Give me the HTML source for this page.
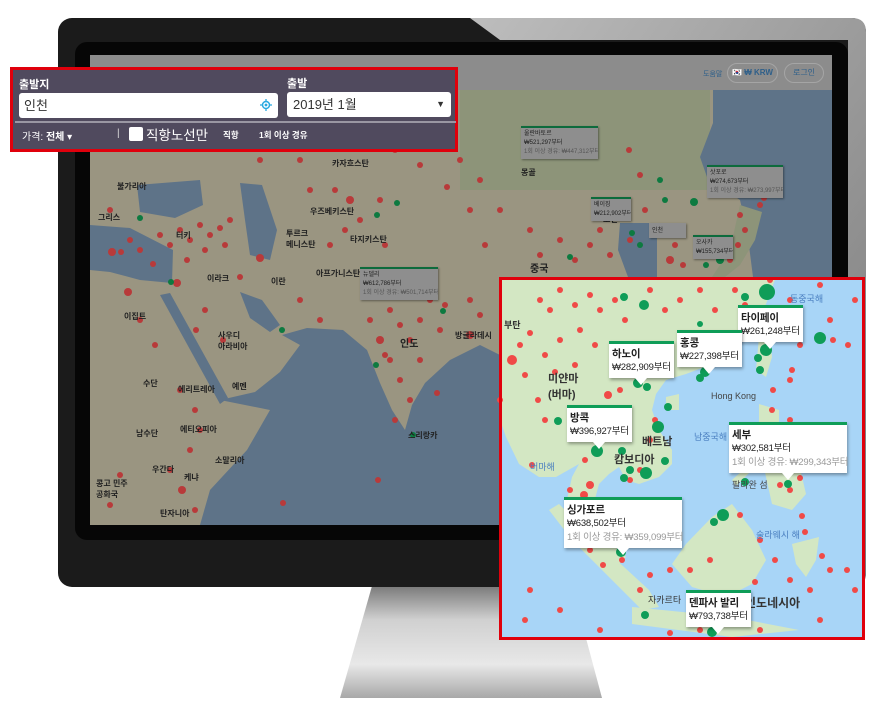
<!DOCTYPE html>
<html><head><meta charset="utf-8"><style>
*{margin:0;padding:0;box-sizing:border-box}
body{width:880px;height:720px;background:#fff;position:relative;overflow:hidden;font-family:"Liberation Sans","Noto Sans CJK KR",sans-serif}
.a{position:absolute}
.tt{position:absolute;background:#fff;border-top:3px solid #0f9d58;box-shadow:1px 2px 3px rgba(0,0,0,.35);font-size:9.5px;letter-spacing:-0.2px;color:#222;padding:3px 3px;line-height:14px;white-space:nowrap}
.tt b{font-weight:bold;display:block;font-size:10.5px}
.tt i{font-style:normal;color:#999;display:block}
.tt:after{content:"";position:absolute;left:50%;bottom:-7px;margin-left:-6px;border:6px solid transparent;border-top-color:#fff;border-bottom:0;border-top-width:7px}
.gt{position:absolute;background:#8e8e8e;border-top:2px solid #0d6b3c;box-shadow:1px 1px 2px rgba(0,0,0,.4);font-size:6px;color:#222;padding:2px 3px;line-height:9px;white-space:nowrap;overflow:hidden}
.gt i{font-style:normal;color:#555;display:block}
.lb{position:absolute;font-size:8px;color:#222;font-weight:bold;white-space:nowrap}
.il{position:absolute;font-size:11px;color:#333;font-weight:bold;white-space:nowrap}
</style></head><body>
<svg class="a" style="left:0;top:0" width="880" height="720">
<defs>
<linearGradient id="st" x1="0" y1="0" x2="0" y2="1"><stop offset="0" stop-color="#7a7a7a"/><stop offset=".3" stop-color="#d0d0d0"/><stop offset=".7" stop-color="#e8e8e8"/><stop offset="1" stop-color="#a8a8a8"/></linearGradient>
<linearGradient id="rf" x1="0" y1="0" x2="1" y2="1"><stop offset="0" stop-color="#bdbdbd"/><stop offset="1" stop-color="#7a7a7a"/></linearGradient>
</defs>
<polygon points="372,586 572,586 602,698 340,698" fill="url(#st)"/>
<rect x="58" y="18" width="808" height="569" rx="14" fill="#1b1b1b"/>
<path d="M470,18 L852,18 Q866,18 866,32 L866,573 Q866,587 852,587 L848,587 L848,40 L500,40 Z" fill="url(#rf)"/>
<rect x="75" y="42" width="773" height="498" rx="12" fill="#060606"/>
<rect x="90" y="55" width="742" height="470" fill="#9a9581"/>
<rect x="90" y="55" width="742" height="35" fill="#8c8c8c"/>
<rect x="460" y="90" width="250" height="100" fill="#8d9479"/>
<polygon points="713,90 832,90 832,277 753,277 747,230 740,200 707,177 700,157 713,123" fill="#5e7388"/>
<polygon points="740,205 762,212 755,240 740,265 725,277 712,277 730,250" fill="#8d9479"/>
<polygon points="620,223 657,223 657,277 628,277 618,250" fill="#5e7388"/>
<polygon points="137,185 200,180 203,205 175,218 140,212" fill="#5e7388"/>
<polygon points="240,183 262,185 277,230 270,260 250,255 245,220" fill="#5e7388"/>
<polygon points="90,225 130,228 173,250 172,283 140,280 110,272 90,270" fill="#5e7388"/>
<polygon points="160,295 170,293 228,398 220,404" fill="#5e7388"/>
<polygon points="240,292 262,300 280,325 270,332 250,318" fill="#5e7388"/>
<polygon points="220,400 255,392 280,372 300,345 282,335 307,328 343,330 367,350 380,383 392,410 405,430 412,405 425,383 450,360 480,345 500,355 500,525 200,525 210,490 247,450 270,410" fill="#5e7388"/>
<g fill="#b83a3a">
<circle cx="150" cy="100" r="3"/><circle cx="110" cy="210" r="3"/><circle cx="112" cy="252" r="4"/><circle cx="121" cy="252" r="3"/><circle cx="130" cy="240" r="3"/><circle cx="140" cy="250" r="3"/><circle cx="160" cy="235" r="3"/><circle cx="170" cy="245" r="3"/><circle cx="180" cy="230" r="3"/><circle cx="190" cy="240" r="3"/><circle cx="200" cy="225" r="3"/><circle cx="210" cy="235" r="3"/><circle cx="220" cy="228" r="3"/><circle cx="230" cy="220" r="3"/><circle cx="225" cy="245" r="3"/><circle cx="205" cy="250" r="3"/><circle cx="187" cy="260" r="3"/><circle cx="153" cy="264" r="3"/><circle cx="128" cy="292" r="4"/><circle cx="177" cy="283" r="4"/><circle cx="260" cy="258" r="4"/><circle cx="240" cy="277" r="3"/><circle cx="205" cy="310" r="3"/><circle cx="196" cy="330" r="3"/><circle cx="223" cy="340" r="3"/><circle cx="140" cy="320" r="3"/><circle cx="155" cy="345" r="3"/><circle cx="180" cy="390" r="3"/><circle cx="195" cy="410" r="3"/><circle cx="200" cy="430" r="3"/><circle cx="190" cy="450" r="3"/><circle cx="170" cy="470" r="3"/><circle cx="182" cy="490" r="4"/><circle cx="195" cy="510" r="3"/><circle cx="120" cy="475" r="3"/><circle cx="110" cy="505" r="3"/><circle cx="300" cy="300" r="3"/><circle cx="320" cy="320" r="3"/><circle cx="330" cy="245" r="3"/><circle cx="345" cy="230" r="3"/><circle cx="360" cy="220" r="3"/><circle cx="380" cy="200" r="3"/><circle cx="385" cy="245" r="3"/><circle cx="400" cy="290" r="3"/><circle cx="380" cy="340" r="4"/><circle cx="378" cy="480" r="3"/><circle cx="283" cy="503" r="3"/><circle cx="390" cy="310" r="3"/><circle cx="370" cy="320" r="3"/><circle cx="400" cy="325" r="3"/><circle cx="420" cy="320" r="3"/><circle cx="410" cy="340" r="3"/><circle cx="390" cy="360" r="3"/><circle cx="400" cy="380" r="3"/><circle cx="410" cy="400" r="3"/><circle cx="420" cy="360" r="3"/><circle cx="440" cy="330" r="3"/><circle cx="445" cy="305" r="3"/><circle cx="470" cy="300" r="3"/><circle cx="470" cy="335" r="4"/><circle cx="480" cy="315" r="3"/><circle cx="430" cy="300" r="3"/><circle cx="385" cy="355" r="3"/><circle cx="395" cy="420" r="3"/><circle cx="437" cy="393" r="3"/><circle cx="460" cy="160" r="3"/><circle cx="480" cy="180" r="3"/><circle cx="470" cy="210" r="3"/><circle cx="485" cy="245" r="3"/><circle cx="500" cy="210" r="3"/><circle cx="530" cy="230" r="3"/><circle cx="540" cy="255" r="3"/><circle cx="560" cy="240" r="3"/><circle cx="575" cy="260" r="3"/><circle cx="590" cy="245" r="3"/><circle cx="600" cy="230" r="3"/><circle cx="610" cy="255" r="3"/><circle cx="630" cy="240" r="3"/><circle cx="640" cy="175" r="3"/><circle cx="645" cy="210" r="3"/><circle cx="670" cy="260" r="4"/><circle cx="675" cy="245" r="3"/><circle cx="683" cy="265" r="3"/><circle cx="740" cy="215" r="3"/><circle cx="745" cy="230" r="3"/><circle cx="738" cy="245" r="3"/><circle cx="730" cy="260" r="3"/><circle cx="764" cy="198" r="3"/><circle cx="760" cy="205" r="3"/><circle cx="629" cy="150" r="3"/><circle cx="395" cy="150" r="3"/><circle cx="420" cy="165" r="3"/><circle cx="447" cy="187" r="3"/><circle cx="310" cy="190" r="3"/><circle cx="335" cy="190" r="3"/><circle cx="350" cy="200" r="4"/><circle cx="300" cy="160" r="3"/><circle cx="260" cy="160" r="3"/></g>
<g fill="#0d7a40"><circle cx="140" cy="218" r="3"/><circle cx="171" cy="282" r="3"/><circle cx="397" cy="203" r="3"/><circle cx="377" cy="215" r="3"/><circle cx="282" cy="330" r="3"/><circle cx="376" cy="365" r="3"/><circle cx="413" cy="435" r="3"/><circle cx="443" cy="311" r="3"/><circle cx="660" cy="180" r="3"/><circle cx="665" cy="200" r="3"/><circle cx="694" cy="202" r="4"/><circle cx="632" cy="233" r="3"/><circle cx="640" cy="245" r="3"/><circle cx="655" cy="232" r="3"/><circle cx="600" cy="213" r="3"/><circle cx="570" cy="257" r="3"/><circle cx="720" cy="260" r="4"/><circle cx="706" cy="265" r="3"/></g>
<rect x="499" y="277" width="366" height="363" fill="#a8d5f7"/>
<polygon points="499,277 776,277 766,304 752,327 732,347 712,364 686,374 666,380 656,394 652,410 659,430 672,450 672,464 659,477 639,484 626,480 619,467 609,474 599,484 592,510 599,530 612,544 626,557 619,564 599,550 576,524 566,504 572,477 579,464 556,477 539,477 519,464 506,437 499,417" fill="#d3e7c3"/>
<polygon points="559,504 599,544 649,590 659,607 642,610 609,577 572,540 549,510" fill="#d3e7c3"/>
<polygon points="632,607 732,617 799,630 732,637 632,624" fill="#d3e7c3"/>
<polygon points="686,544 712,517 732,504 752,530 766,560 752,584 726,597 692,587 672,564" fill="#d3e7c3"/>
<polygon points="759,404 779,410 779,434 799,464 806,494 792,510 772,504 766,477 759,444" fill="#d3e7c3"/>
<polygon points="792,544 819,537 816,560 806,577 796,564" fill="#d3e7c3"/>
<polygon points="759,337 769,327 772,357 766,377 756,370" fill="#d3e7c3"/>
<polygon points="732,480 756,458 760,462 736,486" fill="#d3e7c3"/>
<polygon points="666,397 679,394 679,410 666,410" fill="#d3e7c3"/>
<g fill="#f04a47">
<circle cx="512" cy="360" r="5"/><circle cx="520" cy="345" r="3"/><circle cx="525" cy="375" r="3"/><circle cx="530" cy="333" r="3"/><circle cx="540" cy="300" r="3"/><circle cx="550" cy="310" r="3"/><circle cx="560" cy="290" r="3"/><circle cx="575" cy="305" r="3"/><circle cx="590" cy="295" r="3"/><circle cx="600" cy="310" r="3"/><circle cx="615" cy="300" r="3"/><circle cx="625" cy="320" r="3"/><circle cx="650" cy="290" r="3"/><circle cx="665" cy="310" r="3"/><circle cx="680" cy="300" r="3"/><circle cx="700" cy="290" r="3"/><circle cx="715" cy="310" r="3"/><circle cx="735" cy="290" r="3"/><circle cx="745" cy="305" r="3"/><circle cx="580" cy="330" r="3"/><circle cx="595" cy="345" r="3"/><circle cx="560" cy="340" r="3"/><circle cx="545" cy="355" r="3"/><circle cx="555" cy="372" r="3"/><circle cx="575" cy="365" r="3"/><circle cx="608" cy="395" r="4"/><circle cx="620" cy="390" r="3"/><circle cx="538" cy="400" r="3"/><circle cx="545" cy="420" r="3"/><circle cx="585" cy="460" r="3"/><circle cx="570" cy="490" r="3"/><circle cx="590" cy="485" r="4"/><circle cx="584" cy="495" r="4"/><circle cx="630" cy="480" r="3"/><circle cx="640" cy="470" r="3"/><circle cx="650" cy="440" r="3"/><circle cx="655" cy="420" r="3"/><circle cx="532" cy="465" r="3"/><circle cx="570" cy="520" r="3"/><circle cx="590" cy="550" r="3"/><circle cx="603" cy="565" r="3"/><circle cx="622" cy="560" r="3"/><circle cx="640" cy="590" r="3"/><circle cx="650" cy="575" r="3"/><circle cx="670" cy="570" r="3"/><circle cx="690" cy="570" r="3"/><circle cx="710" cy="560" r="3"/><circle cx="730" cy="600" r="3"/><circle cx="755" cy="582" r="3"/><circle cx="740" cy="515" r="3"/><circle cx="760" cy="540" r="3"/><circle cx="775" cy="560" r="3"/><circle cx="790" cy="580" r="3"/><circle cx="810" cy="590" r="3"/><circle cx="830" cy="570" r="3"/><circle cx="847" cy="570" r="3"/><circle cx="822" cy="556" r="3"/><circle cx="805" cy="532" r="3"/><circle cx="802" cy="516" r="3"/><circle cx="790" cy="490" r="3"/><circle cx="800" cy="478" r="3"/><circle cx="780" cy="485" r="3"/><circle cx="770" cy="470" r="3"/><circle cx="790" cy="420" r="3"/><circle cx="772" cy="410" r="3"/><circle cx="773" cy="390" r="3"/><circle cx="790" cy="380" r="3"/><circle cx="800" cy="345" r="3"/><circle cx="792" cy="370" r="3"/><circle cx="830" cy="320" r="3"/><circle cx="833" cy="340" r="3"/><circle cx="848" cy="345" r="3"/><circle cx="855" cy="300" r="3"/><circle cx="820" cy="285" r="3"/><circle cx="770" cy="280" r="3"/><circle cx="790" cy="300" r="3"/><circle cx="500" cy="400" r="3"/><circle cx="530" cy="590" r="3"/><circle cx="525" cy="620" r="3"/><circle cx="560" cy="610" r="3"/><circle cx="600" cy="630" r="3"/><circle cx="670" cy="633" r="3"/><circle cx="700" cy="630" r="3"/><circle cx="760" cy="630" r="3"/><circle cx="820" cy="620" r="3"/><circle cx="855" cy="590" r="3"/></g>
<g fill="#0f9d58">
<circle cx="767" cy="292" r="8"/><circle cx="745" cy="297" r="4"/><circle cx="624" cy="297" r="4"/><circle cx="644" cy="305" r="5"/><circle cx="700" cy="324" r="3"/><circle cx="766" cy="350" r="6"/><circle cx="758" cy="358" r="4"/><circle cx="760" cy="370" r="4"/><circle cx="820" cy="338" r="6"/><circle cx="705" cy="372" r="5"/><circle cx="700" cy="378" r="4"/><circle cx="638" cy="383" r="5"/><circle cx="647" cy="387" r="4"/><circle cx="668" cy="407" r="4"/><circle cx="558" cy="421" r="4"/><circle cx="658" cy="427" r="6"/><circle cx="597" cy="451" r="6"/><circle cx="622" cy="451" r="4"/><circle cx="665" cy="461" r="4"/><circle cx="630" cy="470" r="4"/><circle cx="646" cy="473" r="6"/><circle cx="624" cy="478" r="4"/><circle cx="723" cy="515" r="6"/><circle cx="714" cy="522" r="4"/><circle cx="621" cy="552" r="5"/><circle cx="645" cy="615" r="4"/><circle cx="788" cy="484" r="4"/><circle cx="745" cy="482" r="4"/><circle cx="712" cy="632" r="5"/></g>
<rect x="500.5" y="278.5" width="363" height="360" fill="none" stroke="#e0000c" stroke-width="3"/>
</svg>

<div class="a" style="left:703px;top:69px;font-size:7px;color:#2e5f8a">도움말</div>
<div class="a" style="left:727px;top:63px;width:51px;height:20px;border:1px solid #a5a5a5;border-radius:10px;font-size:8px;color:#2e5f8a;font-weight:bold;line-height:18px;text-align:center">🇰🇷 ₩ KRW</div>
<div class="a" style="left:784px;top:63px;width:40px;height:20px;border:1px solid #a5a5a5;border-radius:10px;font-size:8px;color:#2e5f8a;line-height:18px;text-align:center">로그인</div>

<div class="lb" style="left:521px;top:167px">몽골</div>
<div class="lb" style="left:530px;top:260px;font-size:10px">중국</div>
<div class="lb" style="left:332px;top:158px">카자흐스탄</div>
<div class="lb" style="left:310px;top:206px">우즈베키스탄</div>
<div class="lb" style="left:286px;top:228px">투르크<br>메니스탄</div>
<div class="lb" style="left:350px;top:234px">타지키스탄</div>
<div class="lb" style="left:316px;top:268px">아프가니스탄</div>
<div class="lb" style="left:271px;top:276px">이란</div>
<div class="lb" style="left:207px;top:273px">이라크</div>
<div class="lb" style="left:124px;top:311px">이집트</div>
<div class="lb" style="left:218px;top:330px">사우디<br>아라비아</div>
<div class="lb" style="left:400px;top:335px;font-size:10px">인도</div>
<div class="lb" style="left:143px;top:378px">수단</div>
<div class="lb" style="left:178px;top:384px">에리트레아</div>
<div class="lb" style="left:232px;top:381px">예멘</div>
<div class="lb" style="left:136px;top:428px">남수단</div>
<div class="lb" style="left:180px;top:424px">에티오피아</div>
<div class="lb" style="left:152px;top:464px">우간다</div>
<div class="lb" style="left:184px;top:472px">케냐</div>
<div class="lb" style="left:215px;top:455px">소말리아</div>
<div class="lb" style="left:160px;top:508px">탄자니아</div>
<div class="lb" style="left:98px;top:212px">그리스</div>
<div class="lb" style="left:117px;top:181px">불가리아</div>
<div class="lb" style="left:176px;top:230px">터키</div>
<div class="lb" style="left:408px;top:430px">스리랑카</div>
<div class="lb" style="left:455px;top:330px">방글라데시</div>
<div class="lb" style="left:603px;top:214px">조선</div>
<div class="lb" style="left:96px;top:478px">콩고 민주<br>공화국</div>

<div class="gt" style="left:521px;top:126px;width:77px">울란바토르<br>₩521,297부터<i>1회 이상 경유: ₩447,312부터</i></div>
<div class="gt" style="left:707px;top:165px;width:76px">삿포로<br>₩274,673부터<i>1회 이상 경유: ₩273,997부터</i></div>
<div class="gt" style="left:591px;top:197px;width:40px">베이징<br>₩212,902부터</div>
<div class="gt" style="left:649px;top:223px;width:37px;border-top-color:#8e8e8e">인천</div>
<div class="gt" style="left:693px;top:235px;width:40px">오사카<br>₩155,734부터</div>
<div class="gt" style="left:360px;top:267px;width:78px">뉴델리<br>₩612,786부터<i>1회 이상 경유: ₩501,714부터</i></div>

<div class="il" style="left:504px;top:318px;font-size:9px">부탄</div>
<div class="il" style="left:548px;top:370px">미얀마<br>(버마)</div>
<div class="il" style="left:642px;top:433px">베트남</div>
<div class="il" style="left:614px;top:451px">캄보디아</div>
<div class="il" style="left:711px;top:391px;font-size:9px;font-weight:normal;color:#444">Hong Kong</div>
<div class="il" style="left:694px;top:430px;font-size:9px;font-weight:normal;color:#4a7fc0">남중국해</div>
<div class="il" style="left:790px;top:292px;font-size:9px;font-weight:normal;color:#4a7fc0">동중국해</div>
<div class="il" style="left:756px;top:528px;font-size:9px;font-weight:normal;color:#4a7fc0">술라웨시 해</div>
<div class="il" style="left:745px;top:594px;font-size:12px">인도네시아</div>
<div class="il" style="left:648px;top:593px;font-size:9px;font-weight:normal">자카르타</div>
<div class="il" style="left:530px;top:460px;font-size:9px;font-weight:normal;color:#4a7fc0">버마해</div>
<div class="il" style="left:732px;top:478px;font-size:9px;font-weight:normal;color:#444">팔라완 섬</div>

<div class="tt" style="left:738px;top:305px"><b>타이페이</b>₩261,248부터</div>
<div class="tt" style="left:677px;top:330px"><b>홍콩</b>₩227,398부터</div>
<div class="tt" style="left:609px;top:341px"><b>하노이</b>₩282,909부터</div>
<div class="tt" style="left:567px;top:405px"><b>방콕</b>₩396,927부터</div>
<div class="tt" style="left:729px;top:422px;width:118px"><b>세부</b>₩302,581부터<i>1회 이상 경유: ₩299,343부터</i></div>
<div class="tt" style="left:564px;top:497px;width:118px"><b>싱가포르</b>₩638,502부터<i>1회 이상 경유: ₩359,099부터</i></div>
<div class="tt" style="left:686px;top:590px"><b>덴파사 발리</b>₩793,738부터</div>

<div class="a" style="left:10px;top:67px;width:448px;height:85px;background:#504a5e;border:3px solid #e0000c">
  <div class="a" style="left:6px;top:6px;font-size:11px;color:#fff;font-weight:bold">출발지</div>
  <div class="a" style="left:274px;top:5px;font-size:11px;color:#fff;font-weight:bold">출발</div>
  <div class="a" style="left:6px;top:23px;width:259px;height:25px;background:#fff;border-radius:3px;font-size:13px;color:#333;line-height:25px;padding-left:5px">인천
    <svg class="a" style="right:6px;top:6px" width="12" height="12" viewBox="0 0 12 12"><circle cx="6" cy="6" r="3.5" fill="none" stroke="#2aa9e0" stroke-width="1.5"/><circle cx="6" cy="6" r="1.4" fill="#2aa9e0"/><path d="M6 0v2.5M6 9.5V12M0 6h2.5M9.5 6H12" stroke="#2aa9e0" stroke-width="1.3"/></svg></div>
  <div class="a" style="left:274px;top:22px;width:164px;height:25px;background:#fff;border-radius:3px;font-size:13px;color:#333;line-height:25px;padding-left:6px">2019년 1월<span class="a" style="right:6px;top:0;font-size:9px">▼</span></div>
  <div class="a" style="left:2px;top:51px;width:441px;height:2px;background:#9a97a3"></div>
  <div class="a" style="left:9px;top:58px;font-size:10px;color:#fff">가격: <b>전체</b> ▾</div>
  <div class="a" style="left:104px;top:58px;font-size:10px;color:#ddd">|</div>
  <div class="a" style="left:116px;top:57px;width:14px;height:14px;background:#fff;border-radius:2px"></div>
  <div class="a" style="left:133px;top:54px;font-size:13.5px;color:#fff">직항노선만</div>
  <div class="a" style="left:210px;top:59px;font-size:8.5px;color:#fff;font-weight:bold">직항</div>
  <div class="a" style="left:246px;top:59px;font-size:8.5px;color:#fff;font-weight:bold">1회 이상 경유</div>
</div>
</body></html>
